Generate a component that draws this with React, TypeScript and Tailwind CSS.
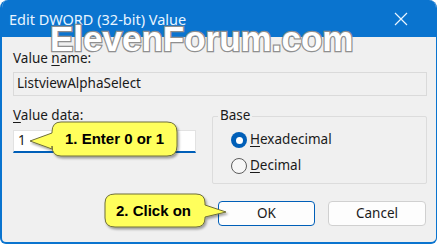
import React from "react";

const U = ({ children }: { children: React.ReactNode }) => (
  <span className="underline underline-offset-[2px] decoration-1">{children}</span>
);

export default function App() {
  return (
    <div className="relative w-[440px] h-[245px] bg-white overflow-hidden font-['Noto_Sans','Liberation_Sans',sans-serif] text-[13.5px] text-[#1a1a1a]">
      <div className="w-[437px] h-[244px] flex flex-col rounded-t-[8px] rounded-b-[6px] overflow-hidden border-l-2 border-r border-b-2 border-[#0a74cf] bg-[#f0f0f0]">
        <div className="h-[37px] shrink-0 bg-[#0a74cf] flex items-center justify-between pl-[9px] pr-[30px] -mx-[2px]">
          <span className="text-[14.5px] text-[#e8f4ff] leading-none pt-[1px]">Edit DWORD (32-bit) Value</span>
          <svg width="14" height="14" viewBox="0 0 14 14" className="mt-[1px]">
            <path d="M1 1 L13 13 M13 1 L1 13" stroke="#e8f4ff" strokeWidth="1.2" />
          </svg>
        </div>
        <div className="flex-1 flex flex-col pl-[11px] pr-[9px] pt-[12px]">
          <div className="leading-[19px]">
            Value <U>n</U>ame:
          </div>
          <div className="mt-[4px] h-[24px] border border-[#dadada] bg-[#f0f0f0] flex items-center pl-[3px] leading-none">
            ListviewAlphaSelect
          </div>
          <div className="mt-[10px] flex items-start gap-[16px]">
            <div className="w-[183px] flex flex-col">
              <div className="leading-[19px]">
                <U>V</U>alue data:
              </div>
              <div className="mt-[5px] h-[23px] bg-white border border-[#e2e2e2] border-b-2 border-b-[#005fb8] flex items-center pl-[4px] leading-none">
                1
              </div>
            </div>
            <div className="relative mt-[10px] w-[215px] h-[68px] border border-[#dcdcdc] rounded-[2px]">
              <span className="absolute -top-[11px] left-[5px] px-[2px] bg-[#f0f0f0] leading-[19px]">Base</span>
              <div className="flex flex-col pl-[18px] pt-[15px] gap-[10px]">
                <div className="flex items-center gap-[3px] h-[16px]">
                  <span className="w-[16px] h-[16px] rounded-full bg-[#005fb8] flex items-center justify-center">
                    <span className="w-[7px] h-[7px] rounded-full bg-white" />
                  </span>
                  <span className="leading-none"><U>H</U>exadecimal</span>
                </div>
                <div className="flex items-center gap-[3px] h-[16px]">
                  <span className="w-[16px] h-[16px] rounded-full border border-[#5c5c5c] bg-[#f7f7f7]" />
                  <span className="leading-none"><U>D</U>ecimal</span>
                </div>
              </div>
            </div>
          </div>
          <div className="mt-[17px] flex justify-end gap-[13px] pr-[1px]">
            <button className="w-[97px] h-[25px] bg-[#fdfdfd] border border-[#005fb8] rounded-[4px] leading-none">OK</button>
            <button className="w-[98px] h-[25px] bg-[#fdfdfd] border border-[#d0d0d0] rounded-[4px] leading-none">Cancel</button>
          </div>
        </div>
      </div>

      {/* watermark */}
      <div className="absolute left-[50px] top-[19px] font-['Liberation_Sans',Arial,sans-serif] font-bold text-[35px] leading-[40px] text-white [-webkit-text-stroke:2.5px_#8f8f8f] [paint-order:stroke_fill] pointer-events-none">
        ElevenForum.com
      </div>

      {/* callouts */}
      <svg className="absolute left-0 top-0 pointer-events-none" width="440" height="245" viewBox="0 0 440 245">
        <defs>
          <filter id="sh" x="-20%" y="-20%" width="140%" height="160%">
            <feDropShadow dx="1.5" dy="2" stdDeviation="1.2" floodColor="#000" floodOpacity="0.35" />
          </filter>
        </defs>
        <path
          d="M61 122 H167 Q177 122 177 132 V146 Q177 156 167 156 H61 Q52 156 52 146 V149 L30 141 L52 133 V132 Q52 122 61 122 Z"
          fill="#ffff5c"
          stroke="#6e6e3a"
          strokeWidth="1"
          filter="url(#sh)"
        />
        <path
          d="M115 194 H196 Q205 194 205 203 V205 L226 212 L205 217 V218 Q205 227 196 227 H115 Q105 227 105 218 V203 Q105 194 115 194 Z"
          fill="#ffff5c"
          stroke="#6e6e3a"
          strokeWidth="1"
          filter="url(#sh)"
        />
      </svg>
      <div className="absolute left-[65px] top-[130px] font-['Liberation_Sans',Arial,sans-serif] font-bold text-[15px] leading-[17px] text-black">
        1. Enter 0 or 1
      </div>
      <div className="absolute left-[116px] top-[202px] font-['Liberation_Sans',Arial,sans-serif] font-bold text-[15px] leading-[17px] text-black">
        2. Click on
      </div>
    </div>
  );
}
